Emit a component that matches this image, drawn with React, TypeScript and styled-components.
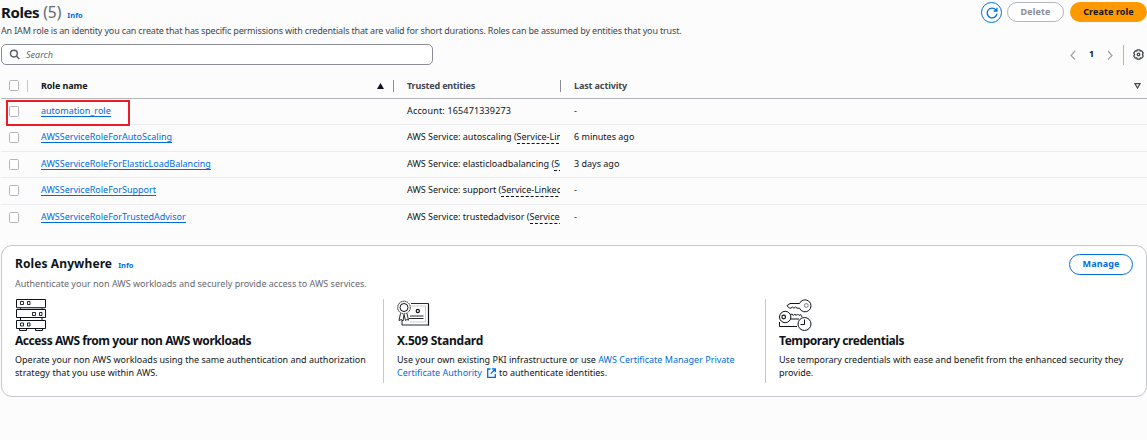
import React from "react";
import styled, { createGlobalStyle } from "styled-components";

const GlobalStyle = createGlobalStyle`
  *, *::before, *::after { box-sizing: border-box; }
  body {
    margin: 0;
    background: #fcfcfc;
    color: #0f141a;
    font-family: "Noto Sans", "Open Sans", sans-serif;
    font-size: 9px;
    line-height: 13px;
    overflow: hidden;
  }
  h1, h2, h3, p { margin: 0; }
`;

const Page = styled.main`
  width: 1147px;
  height: 440px;
  padding-left: 1px;
  display: flex;
  flex-direction: column;
`;

const Fit = styled.span<{ $ls?: number }>`
  letter-spacing: ${(p) => p.$ls ?? 0}px;
  white-space: nowrap;
`;

const Header = styled.header`
  display: flex;
  justify-content: space-between;
  align-items: flex-start;
  height: 24px;
  padding-top: 2px;
`;

const TitleRow = styled.div`
  display: flex;
  align-items: baseline;
`;

const Title = styled.h1`
  font-size: 15px;
  line-height: 21px;
  font-weight: 700;
  letter-spacing: -0.4px;
`;

const Count = styled.span`
  margin-left: 4px;
  font-size: 15.5px;
  line-height: 21px;
  color: #656871;
`;

const Info = styled.a`
  margin-left: 6px;
  font-size: 7.5px;
  line-height: 12px;
  font-weight: 700;
  color: #006ce0;
`;

const Actions = styled.div`
  display: flex;
  gap: 6px;
`;

const Button = styled.button<{ $kind: "normal" | "primary" | "disabled"; $w: number }>`
  width: ${(p) => p.$w}px;
  height: 20px;
  padding: 0 0 2px;
  display: flex;
  align-items: center;
  justify-content: center;
  font-family: inherit;
  font-size: 9px;
  font-weight: 700;
  letter-spacing: 0.1px;
  border-radius: 11px;
  border: ${(p) => (p.$kind === "primary" ? "0" : p.$kind === "disabled" ? "1px solid #b4b4bb" : "1.5px solid #006ce0")};
  background: ${(p) => (p.$kind === "primary" ? "#ff9900" : "#fff")};
  color: ${(p) => (p.$kind === "primary" ? "#0f141a" : p.$kind === "disabled" ? "#8c8c94" : "#006ce0")};
`;

const RefreshButton = styled(Button)`
  height: 21px;
  margin-right: -1px;
  padding: 0;
`;

const ManageButton = styled(Button)`
  height: 21px;
`;

const Description = styled.p`
  height: 18px;
  line-height: 14px;
  color: #424650;
`;

const Toolbar = styled.div`
  display: flex;
  justify-content: space-between;
  height: 31px;
  padding-top: 2px;
`;

const SearchBox = styled.div`
  width: 432px;
  height: 21px;
  display: flex;
  align-items: center;
  gap: 6px;
  padding-left: 7px;
  border: 1px solid #8c8c94;
  border-radius: 5px;
  background: #fff;
  color: #656871;
  font-style: italic;
`;

const Pager = styled.div`
  display: flex;
  align-items: center;
  height: 21px;
  padding-right: 3px;
  color: #8c8c94;
`;

const PageNumber = styled.span`
  width: 31px;
  text-align: center;
  font-weight: 700;
  color: #0f141a;
  padding-bottom: 2px;
`;

const Rule = styled.span`
  width: 1px;
  height: 20px;
  margin: 0 9px 0 10px;
  background: #b4b4bb;
`;

const Grid = styled.div<{ $h: number; $line?: string; $top?: boolean }>`
  display: grid;
  grid-template-columns: 26px 366px 167px 1fr;
  height: ${(p) => p.$h}px;
  align-items: ${(p) => (p.$top ? "start" : "center")};
  border-bottom: 1px solid ${(p) => p.$line ?? "transparent"};
`;

const HeadCell = styled.div<{ $muted?: boolean; $bar?: string }>`
  display: flex;
  align-items: center;
  justify-content: space-between;
  height: 12px;
  padding: 0 ${(p) => (p.$muted ? 6 : 9)}px 0 13px;
  font-weight: 700;
  color: ${(p) => (p.$muted ? "#424650" : "#0f141a")};
  border-left: 1px solid ${(p) => p.$bar ?? "#8c8c94"};
`;

const Cell = styled.div`
  margin-top: 5px;
  padding-left: 14px;
  overflow: hidden;
  white-space: nowrap;
  height: 17px;
  line-height: 13px;
`;

const CheckCell = styled.div<{ $top?: number }>`
  padding: ${(p) => p.$top ?? 0}px 0 0 8px;
`;

const Checkbox = styled.span`
  display: block;
  width: 10px;
  height: 11px;
  border: 1px solid #b4b4bb;
  border-radius: 1.5px;
  background: #fff;
`;

const RoleLink = styled.a`
  display: inline-block;
  line-height: 11px;
  height: 12px;
  margin-top: 1px;
  vertical-align: top;
  color: #006ce0;
  border-bottom: 1px solid #006ce0;
`;

const Dashed = styled.span`
  display: inline-block;
  line-height: 11px;
  height: 13px;
  margin-top: 1px;
  vertical-align: top;
  border-bottom: 1px dashed #0f141a;
`;

const Highlight = styled.div`
  position: absolute;
  left: 6px;
  top: 100px;
  width: 124px;
  height: 26px;
  border: 2px solid #ed1c24;
`;

const Panel = styled.section`
  margin-top: 14px;
  height: 152px;
  border: 1px solid #c6c6cd;
  border-radius: 11px;
  background: #fff;
  padding: 8px 13px 0;
`;

const PanelHeader = styled.div`
  display: flex;
  justify-content: space-between;
  height: 23px;
`;

const PanelTitle = styled.h2`
  font-size: 12px;
  line-height: 20px;
  letter-spacing: 0.1px;
`;

const PanelText = styled.p`
  height: 22px;
  line-height: 14px;
  color: #656871;
`;

const Features = styled.div`
  display: grid;
  grid-template-columns: 368px 382px 1fr;
  height: 84px;
`;

const Feature = styled.div<{ $bar?: boolean }>`
  border-left: ${(p) => (p.$bar ? "1px solid #c6c6cd" : "0")};
  padding-left: ${(p) => (p.$bar ? 13 : 0)}px;
`;

const FeatureTitle = styled.h3<{ $ls: number }>`
  font-size: 12px;
  line-height: 18px;
  margin-bottom: 3px;
  letter-spacing: ${(p) => p.$ls}px;
`;

const FeatureText = styled.p`
  line-height: 13px;
  white-space: nowrap;
`;

const Blue = styled.a`
  color: #006ce0;
`;

const Art = styled.svg`
  display: block;
  overflow: visible;
  fill: none;
  stroke: #0f141a;
`;

const InlineIcon = styled.svg`
  vertical-align: -2px;
  margin: 0 3px 0 5px;
`;

const RefreshIcon = () => (
  <svg width="12" height="12" viewBox="0 0 12 12" fill="none" stroke="#006ce0" strokeWidth="1.3">
    <path d="M11 6.600a4.900 4.900 0 1 1-1.300-4L10.800 4" />
    <path d="M10.900 0.800V4H7.600" />
  </svg>
);

const SearchIcon = () => (
  <svg width="11" height="11" viewBox="0 0 11 11" fill="none" stroke="#5a5e68" strokeWidth="1.4">
    <circle cx="4.900" cy="4.600" r="3.400" />
    <path d="M7.300 7L10.300 10" />
  </svg>
);

const Chevron = ({ d }: { d: string }) => (
  <svg width="6" height="10" viewBox="0 0 6 10" fill="none" stroke="#a4a4ac" strokeWidth="1.3">
    <path d={d} />
  </svg>
);

const GearIcon = () => (
  <svg width="11" height="11" viewBox="0 0 11 11" fill="none" stroke="#424650" strokeWidth="1.3" strokeLinejoin="round">
    <path d="M4.200 0.800h2.600l.4 1.300 1.500-.2 1.500 2-.8 1.600.8 1.600-1.500 2-1.500-.2-.4 1.300H4.200l-.4-1.300-1.500.2-1.500-2 .8-1.600-.8-1.600 1.500-2 1.500.2z" />
    <circle cx="5.500" cy="5.500" r="1.300" />
  </svg>
);

const ServersIcon = () => (
  <Art width="32" height="33" viewBox="0 0 32 33">
    <path d="M1.500.5h29v8h-29zM1.500 10.500h29v8h-29zM1.500 21.500h29v8h-29z" />
    <path d="M5.500 8.500v2M27 8.500v2M5.500 18.500v3M27 18.500v3M4.500 30v1.500h7v-1.500M20.500 30v1.500h7v-1.500" />
    <path d="M5.500 2.500h3v3h-3zM12.500 2.500h2.500v3h-2.500zM17.500 13.500h3v3h-3zM24.500 13.500h2.500v3h-2.500zM5.500 24h3v3h-3zM12.500 24h2.500v3h-2.500z" strokeWidth=".9" />
    <path d="M2 9h28" stroke="#6d7077" />
  </Art>
);

const CertificateIcon = () => (
  <Art width="33" height="33" viewBox="0 0 33 33">
    <path d="M14 4.500h17.500v21.500H5v-5" strokeWidth=".9" />
    <path d="M31.500 5v21.500" strokeWidth="1.200" />
    <path d="M14 7h14.500v16H13" stroke="#999" strokeWidth=".5" />
    <circle cx="7" cy="8.500" r="6.300" strokeWidth=".9" strokeDasharray="1.600 .5" />
    <circle cx="7" cy="8.500" r="4" />
    <circle cx="20.800" cy="12" r="1.600" strokeWidth="1.200" />
    <path d="M3.500 14.500l-1.500 7 2.500-1 1.500 1.500L7 15.500l1.500 6 1.500-1 1.500.7L10 14.500" strokeWidth=".9" />
    <path d="M13 17h13.500M12 19.500h14.500" strokeWidth=".9" />
  </Art>
);

const KeysIcon = () => (
  <Art width="33" height="33" viewBox="0 0 33 33">
    <path d="M20.500 4.500H11l-3 2.200L10.500 9.200H12l1.300-1.200L15 9.200l1.500-1.200L18 9.200h2.500" />
    <path d="M20.500 4.500a6 6 0 1 1 0 4.700" />
    <circle cx="27.300" cy="6.500" r="1.900" stroke="#777" />
    <path d="M11.500 15.500l1.500-.5 1.300 1.500 1.500-1.500 1.300 1.500 1.500-1.500 1.500 1.500 1.500-1 1.500 2.500M11.500 20H20" />
    <circle cx="6.200" cy="18" r="5.700" />
    <circle cx="4.700" cy="18" r="1.800" strokeWidth="1.200" />
    <path d="M.5 23v4.500h17.500" />
    <circle cx="25.500" cy="25" r="6.500" fill="#fff" />
    <path d="M25.500 20.500v5h-4" />
  </Art>
);

const ExternalIcon = () => (
  <InlineIcon width="9" height="10" viewBox="0 0 9 10" fill="none" stroke="#006ce0" strokeWidth="1.300">
    <path d="M3.500 1H.7v8.300h7.600V6M5 .9h3.300v3.400M8.200 1L3.800 5.600" />
  </InlineIcon>
);

interface Role {
  name: string;
  trusted: string;
  trustedLs?: number;
  linked?: boolean;
  activity: string;
  height: number;
}

const roles: Role[] = [
  { name: "automation_role", trusted: "Account: 165471339273", trustedLs: 0.16, activity: "-", height: 26 },
  { name: "AWSServiceRoleForAutoScaling", trusted: "AWS Service: autoscaling", linked: true, activity: "6 minutes ago", height: 27 },
  { name: "AWSServiceRoleForElasticLoadBalancing", trusted: "AWS Service: elasticloadbalancing", linked: true, activity: "3 days ago", height: 26 },
  { name: "AWSServiceRoleForSupport", trusted: "AWS Service: support", linked: true, activity: "-", height: 27 },
  { name: "AWSServiceRoleForTrustedAdvisor", trusted: "AWS Service: trustedadvisor", linked: true, activity: "-", height: 26 },
];

export default function App() {
  return (
    <Page>
      <GlobalStyle />
      <Header>
        <TitleRow>
          <Title>Roles</Title>
          <Count>(5)</Count>
          <Info>Info</Info>
        </TitleRow>
        <Actions>
          <RefreshButton $kind="normal" $w={21} aria-label="Refresh"><RefreshIcon /></RefreshButton>
          <Button $kind="disabled" $w={57}>Delete</Button>
          <Button $kind="primary" $w={77}>Create role</Button>
        </Actions>
      </Header>
      <Description>
        <Fit $ls={-0.163}>An IAM role is an identity you can create that has specific permissions with credentials that are valid for short durations. Roles can be assumed by entities that you trust.</Fit>
      </Description>
      <Toolbar>
        <SearchBox><SearchIcon /><Fit>Search</Fit></SearchBox>
        <Pager>
          <Chevron d="M5 1L1 5.500l4 4" />
          <PageNumber>1</PageNumber>
          <Chevron d="M1 1L5 5.500 1 9.500" />
          <Rule />
          <GearIcon />
        </Pager>
      </Toolbar>
      <Grid $h={26} $line="#b4b4bb">
        <CheckCell><Checkbox /></CheckCell>
        <HeadCell $bar="#c6c6cd">
          <Fit $ls={-0.1}>Role name</Fit>
          <svg width="7" height="6" viewBox="0 0 7 6"><path d="M3.500 0L7 6H0z" fill="#0f141a" /></svg>
        </HeadCell>
        <HeadCell $muted><Fit $ls={-0.16}>Trusted entities</Fit></HeadCell>
        <HeadCell $muted>
          <Fit $ls={-0.12}>Last activity</Fit>
          <svg width="7" height="6" viewBox="0 0 7 6"><path d="M1 .7h5L3.500 5z" fill="none" stroke="#424650" strokeWidth="1.200" /></svg>
        </HeadCell>
      </Grid>
      {roles.map((r, i) => (
        <Grid key={r.name} $h={r.height} $line={i < 4 ? "#ebebf0" : undefined} $top>
          <CheckCell $top={7}><Checkbox /></CheckCell>
          <Cell><RoleLink>{r.name}</RoleLink></Cell>
          <Cell>
            <Fit $ls={r.trustedLs}>{r.trusted}</Fit>
            {r.linked && <> (<Dashed>Service-Linked Role</Dashed>)</>}
          </Cell>
          <Cell>{r.activity}</Cell>
        </Grid>
      ))}
      <Highlight />
      <Panel>
        <PanelHeader>
          <TitleRow>
            <PanelTitle>Roles Anywhere</PanelTitle>
            <Info>Info</Info>
          </TitleRow>
          <ManageButton $kind="normal" $w={64}>Manage</ManageButton>
        </PanelHeader>
        <PanelText><Fit>Authenticate your non AWS workloads and securely provide access to AWS services.</Fit></PanelText>
        <Features>
          <Feature>
            <ServersIcon />
            <FeatureTitle $ls={-0.44}>Access AWS from your non AWS workloads</FeatureTitle>
            <FeatureText>
              <Fit>Operate your non AWS workloads using the same authentication and authorization</Fit><br />
              <Fit $ls={0.05}>strategy that you use within AWS.</Fit>
            </FeatureText>
          </Feature>
          <Feature $bar>
            <CertificateIcon />
            <FeatureTitle $ls={-0.24}>X.509 Standard</FeatureTitle>
            <FeatureText>
              <Fit>Use your own existing PKI infrastructure or use <Blue>AWS Certificate Manager Private</Blue></Fit><br />
              <Fit><Blue>Certificate Authority</Blue><ExternalIcon />to authenticate identities.</Fit>
            </FeatureText>
          </Feature>
          <Feature $bar>
            <KeysIcon />
            <FeatureTitle $ls={-0.44}>Temporary credentials</FeatureTitle>
            <FeatureText>
              <Fit>Use temporary credentials with ease and benefit from the enhanced security they</Fit><br />
              <Fit>provide.</Fit>
            </FeatureText>
          </Feature>
        </Features>
      </Panel>
    </Page>
  );
}
